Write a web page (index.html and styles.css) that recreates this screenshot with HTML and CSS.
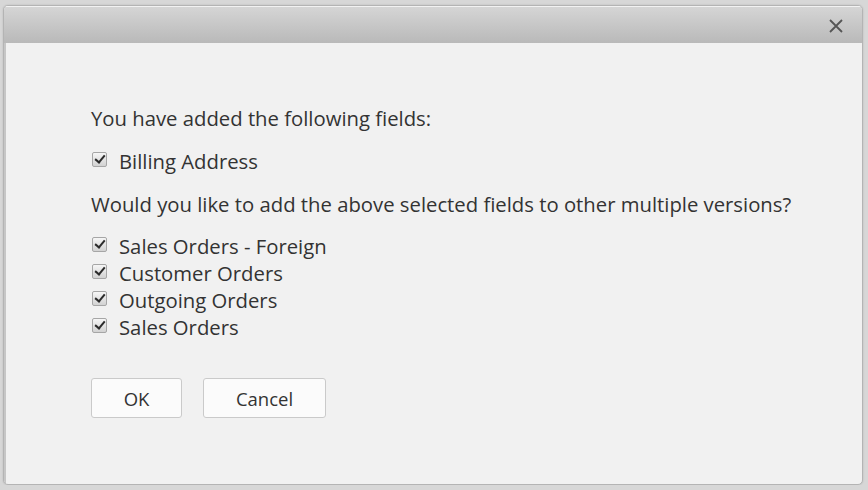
FILE: index.html
```html
<!DOCTYPE html>
<html lang="en">
<head>
    <meta charset="UTF-8">
    <title>Add Fields</title>
    <link rel="stylesheet" href="styles.css">
</head>
<body>
    <div class="dialog">
        <div class="titlebar">
            <span class="close">
                <svg width="16" height="16" viewBox="0 0 16 16"><path d="M2 2L14 14M14 2L2 14" stroke="#555" stroke-width="1.8" fill="none"/></svg>
            </span>
        </div>
        <div class="content">
            <p class="msg">You have added the following fields:</p>
            <label class="check"><span class="box"></span>Billing Address</label>
            <p class="msg question">Would you like to add the above selected fields to other multiple versions?</p>
            <div class="list">
                <label class="check"><span class="box"></span>Sales Orders - Foreign</label>
                <label class="check"><span class="box"></span>Customer Orders</label>
                <label class="check"><span class="box"></span>Outgoing Orders</label>
                <label class="check"><span class="box"></span>Sales Orders</label>
            </div>
            <div class="buttons">
                <button class="btn ok">OK</button>
                <button class="btn cancel">Cancel</button>
            </div>
        </div>
    </div>
</body>
</html>
```

FILE: styles.css
```css
body {
    margin: 0;
    padding: 5px 0 0 3px;
    background-color: #d7d7d7;
    font-family: "Open Sans", Arial, sans-serif;
    color: #333;
}
.dialog {
    width: 858px;
    height: 478px;
    border: 1px solid #b4b4b4;
    border-radius: 5px;
    background-color: #f1f1f1;
    overflow: hidden;
    box-shadow: 0 0 2px rgba(0, 0, 0, 0.15);
}
.titlebar {
    height: 36px;
    background: linear-gradient(#d5d5d5, #b9b9b9);
    border-top: 1px solid #f2f2f2;
    display: flex;
    align-items: center;
    justify-content: flex-end;
    padding-right: 18px;
}
.close {
    display: flex;
    margin-top: 1px;
}
.content {
    padding: 62px 0 0 85px;
    border-left: 2px solid #c6c6c6;
    height: 100%;
}
.msg {
    margin: 0;
    font-size: 20.3px;
    line-height: 26px;
}
.question {
    margin-top: 16px;
}
.check {
    display: flex;
    align-items: center;
    font-size: 20.3px;
    line-height: 27px;
    gap: 12px;
    margin-top: 17px;
}
.list {
    margin-top: 16px;
}
.list .check {
    margin-top: 0;
}
.box {
    width: 13px;
    height: 13px;
    margin-left: 1px;
    margin-top: -5px;
    border: 1px solid #a6a6a6;
    border-radius: 2px;
    background: linear-gradient(#f6f6f6, #d2d2d2);
    position: relative;
}
.box::after {
    content: "";
    position: absolute;
    left: 4px;
    top: 0px;
    width: 4px;
    height: 8px;
    border: solid #2b2b2b;
    border-width: 0 2.5px 2.5px 0;
    transform: rotate(40deg);
}
.buttons {
    display: flex;
    gap: 21px;
    margin-top: 37px;
}
.btn {
    height: 40px;
    font-family: "Open Sans", Arial, sans-serif;
    font-size: 18.5px;
    color: #333;
    background-color: #fbfbfb;
    border: 1px solid #cacaca;
    border-radius: 3px;
}
.ok {
    width: 91px;
}
.cancel {
    width: 123px;
}
```
